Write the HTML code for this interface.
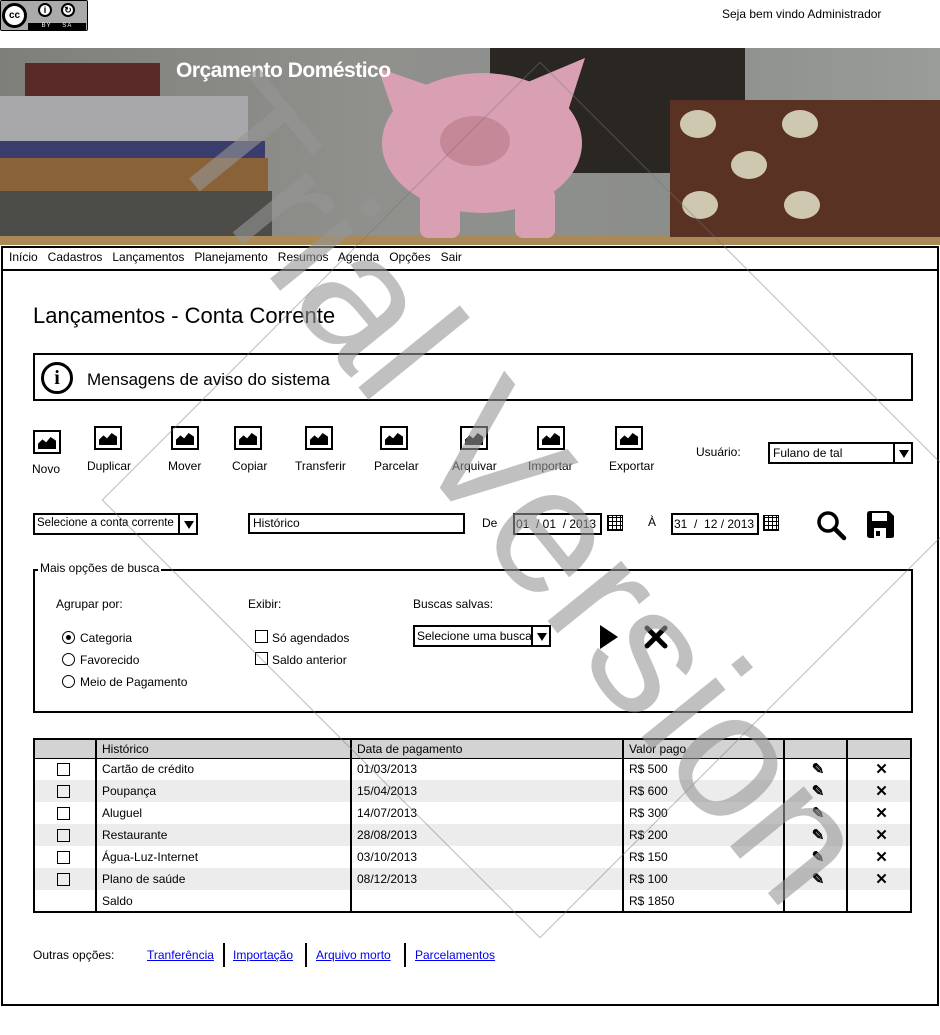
<!DOCTYPE html>
<html><head><meta charset="utf-8"><style>
*{margin:0;padding:0;box-sizing:border-box}
body{width:940px;height:1009px;position:relative;overflow:hidden;background:#fff;font-family:"Liberation Sans",sans-serif;font-size:12px;color:#000}
.a{position:absolute}
.bx{position:absolute;border:2px solid #000;background:#fff}
.ico{position:absolute;width:28px;height:24px;border:2px solid #000;background:#fff}
.ico:after{content:"";position:absolute;left:3px;right:3px;bottom:3px;height:12px;background:#000;clip-path:polygon(0 100%,0 55%,25% 20%,45% 45%,70% 0,100% 30%,100% 100%)}
.lbl{position:absolute;font-size:12px}
.sel .arr{position:absolute;right:0;top:0;bottom:0;width:18px;border-left:2px solid #000}
.sel .arr:after{content:"";position:absolute;left:4px;top:6px;border-left:5px solid transparent;border-right:5px solid transparent;border-top:8px solid #000}
.cal{position:absolute;width:16px;height:16px;border:1px solid #000;background:repeating-linear-gradient(90deg,#000 0 1px,transparent 1px 4px),repeating-linear-gradient(0deg,#000 0 1px,transparent 1px 4px)}
.rad{position:absolute;width:13px;height:13px;border:1.5px solid #000;border-radius:50%}
.chk{position:absolute;width:13px;height:13px;border:1.5px solid #000;background:#fff}
table{position:absolute;left:33px;top:738px;width:879px;border-collapse:collapse;border:2px solid #000}
td{height:22px;font-size:12px;padding-left:5px;border-left:2px solid #000;vertical-align:middle}
tr.h td{background:#d3d3d3;height:19px;border-bottom:1px solid #000}
tr.s td{background:#ececec}
.ck{display:inline-block;width:13px;height:13px;border:1.5px solid #000;margin-left:22px;vertical-align:middle}
.pe{text-align:center;font-size:15px;font-weight:bold}
.x{text-align:center;font-size:15px;font-weight:bold}
a{color:#00e;text-decoration:underline}
</style></head><body>
<div class="a" style="left:0;top:0;width:88px;height:31px;background:#000;border-radius:2px">
<div class="a" style="left:1px;top:1px;width:86px;height:29px;background:#aaa"></div>
<div class="a" style="left:28px;top:23px;width:58px;height:7px;background:#000;color:#fff;font-size:6px;line-height:7px;text-align:center;letter-spacing:1px">BY&nbsp;&nbsp;&nbsp;&nbsp;SA</div>
<div class="a" style="left:2px;top:3px;width:25px;height:25px;border-radius:50%;background:#fff;border:3px solid #000;font-weight:bold;font-size:10px;line-height:19px;text-align:center">cc</div>
<div class="a" style="left:38px;top:3px;width:14px;height:14px;border-radius:50%;background:#fff;border:2px solid #000;font-size:9px;font-weight:bold;line-height:10px;text-align:center">i</div>
<div class="a" style="left:61px;top:3px;width:14px;height:14px;border-radius:50%;background:#fff;border:2px solid #000;font-size:9px;font-weight:bold;line-height:10px;text-align:center">↻</div>
</div>
<div class="a" style="left:722px;top:7px;font-size:12px">Seja bem vindo Administrador</div>
<div class="a" style="left:0;top:48px;width:940px;height:197px;background:#8a8c88;overflow:hidden">
<div class="a" style="left:0;top:0;width:940px;height:197px;background:linear-gradient(90deg,#7e7f7b,#90918d 40%,#8c8e8c 70%,#9a9c9a)"></div>
<div class="a" style="left:490px;top:0;width:255px;height:125px;background:#2a2622"></div>
<div class="a" style="left:25px;top:15px;width:135px;height:33px;background:#5a2a28"></div>
<div class="a" style="left:0;top:48px;width:248px;height:62px;background:#a8a8aa"></div>
<div class="a" style="left:0;top:93px;width:265px;height:20px;background:#3a3d6c"></div>
<div class="a" style="left:0;top:110px;width:268px;height:33px;background:#8a6238"></div>
<div class="a" style="left:0;top:143px;width:272px;height:50px;background:#4c4c48"></div>
<div class="a" style="left:0;top:188px;width:940px;height:9px;background:#a98955"></div>
<div class="a" style="left:378px;top:20px;width:75px;height:65px;background:#d9a0b4;clip-path:polygon(0 0,100% 40%,30% 100%)"></div>
<div class="a" style="left:510px;top:10px;width:75px;height:70px;background:#d9a0b4;clip-path:polygon(100% 0,70% 100%,0 45%)"></div>
<div class="a" style="left:382px;top:25px;width:200px;height:140px;border-radius:50%;background:#d9a0b4"></div>
<div class="a" style="left:420px;top:140px;width:40px;height:50px;background:#d9a0b4;border-radius:8px"></div>
<div class="a" style="left:515px;top:140px;width:40px;height:50px;background:#d9a0b4;border-radius:8px"></div>
<div class="a" style="left:440px;top:68px;width:70px;height:50px;border-radius:50%;background:#c58898"></div>
<div class="a" style="left:670px;top:52px;width:270px;height:137px;background:#5a3224"></div>
<div class="a" style="left:680px;top:62px;width:36px;height:28px;border-radius:50%;background:#cfc8b0"></div>
<div class="a" style="left:782px;top:62px;width:36px;height:28px;border-radius:50%;background:#cfc8b0"></div>
<div class="a" style="left:731px;top:103px;width:36px;height:28px;border-radius:50%;background:#cfc8b0"></div>
<div class="a" style="left:682px;top:143px;width:36px;height:28px;border-radius:50%;background:#cfc8b0"></div>
<div class="a" style="left:784px;top:143px;width:36px;height:28px;border-radius:50%;background:#cfc8b0"></div>
<div class="a" style="left:176px;top:11px;color:#fff;font-weight:bold;font-size:21px;letter-spacing:-0.5px">Orçamento Doméstico</div>
</div>
<div class="a" style="left:1px;top:246px;width:938px;height:760px;border:2px solid #000;border-top:none"></div>
<div class="a" style="left:1px;top:246px;width:938px;height:25px;border:2px solid #000;background:#fff"></div>
<div class="a" style="left:9px;top:250px;font-size:12px">Início&nbsp;&nbsp; Cadastros&nbsp;&nbsp; Lançamentos&nbsp;&nbsp; Planejamento&nbsp;&nbsp; Resumos&nbsp;&nbsp; Agenda&nbsp;&nbsp; Opções&nbsp;&nbsp; Sair</div>
<div class="a" style="left:33px;top:303px;font-size:22px">Lançamentos - Conta Corrente</div>
<div class="bx" style="left:33px;top:353px;width:880px;height:48px"></div>
<div class="a" style="left:41px;top:362px;width:32px;height:32px;border:3px solid #000;border-radius:50%;text-align:center;font:bold 20px/26px 'Liberation Serif',serif">i</div>
<div class="a" style="left:87px;top:370px;font-size:17px">Mensagens de aviso do sistema</div>
<div class="ico" style="left:33px;top:430px"></div><div class="lbl" style="left:32px;top:462px">Novo</div>
<div class="ico" style="left:94px;top:426px"></div><div class="lbl" style="left:87px;top:459px">Duplicar</div>
<div class="ico" style="left:171px;top:426px"></div><div class="lbl" style="left:168px;top:459px">Mover</div>
<div class="ico" style="left:234px;top:426px"></div><div class="lbl" style="left:232px;top:459px">Copiar</div>
<div class="ico" style="left:305px;top:426px"></div><div class="lbl" style="left:295px;top:459px">Transferir</div>
<div class="ico" style="left:380px;top:426px"></div><div class="lbl" style="left:374px;top:459px">Parcelar</div>
<div class="ico" style="left:460px;top:426px"></div><div class="lbl" style="left:452px;top:459px">Arquivar</div>
<div class="ico" style="left:537px;top:426px"></div><div class="lbl" style="left:528px;top:459px">Importar</div>
<div class="ico" style="left:615px;top:426px"></div><div class="lbl" style="left:609px;top:459px">Exportar</div>
<div class="lbl" style="left:696px;top:445px">Usuário:</div>
<div class="bx sel" style="left:768px;top:442px;width:145px;height:22px;padding:2px 3px">Fulano de tal<div class="arr"></div></div>
<div class="bx sel" style="left:33px;top:513px;width:165px;height:22px;padding:2px 2px;font-size:11.5px">Selecione a conta corrente<div class="arr"></div></div>
<div class="bx" style="left:248px;top:513px;width:217px;height:21px;padding:1px 3px">Histórico</div>
<div class="lbl" style="left:482px;top:516px">De</div>
<div class="bx" style="left:513px;top:513px;width:89px;height:22px;padding:2px 1px">01&nbsp; / 01&nbsp; / 2013</div>
<div class="cal" style="left:607px;top:515px"></div>
<div class="lbl" style="left:648px;top:515px">À</div>
<div class="bx" style="left:671px;top:513px;width:88px;height:22px;padding:2px 1px">31&nbsp; /&nbsp; 12 / 2013</div>
<div class="cal" style="left:763px;top:515px"></div>
<svg class="a" style="left:815px;top:509px" width="34" height="32" viewBox="0 0 34 32"><circle cx="13" cy="13" r="9" fill="none" stroke="#000" stroke-width="3.5"/><line x1="19.5" y1="19.5" x2="29" y2="29" stroke="#000" stroke-width="4.5" stroke-linecap="round"/></svg>
<svg class="a" style="left:865px;top:510px" width="30" height="29" viewBox="0 0 30 29"><path d="M2 4Q2 1 5 1H24L29 6V26Q29 28 26 28H5Q2 28 2 25Z" fill="#000"/><rect x="7" y="3" width="15" height="8" fill="#fff"/><rect x="9" y="18" width="12" height="10" fill="#fff"/><rect x="11" y="21" width="4" height="5" fill="#000"/></svg>
<div class="bx" style="left:33px;top:569px;width:880px;height:144px;background:transparent"></div>
<div class="a" style="left:38px;top:561px;background:#fff;padding:0 2px">Mais opções de busca</div>
<div class="lbl" style="left:56px;top:597px">Agrupar por:</div>
<div class="rad" style="left:62px;top:631px"><div class="a" style="left:2.5px;top:2.5px;width:5px;height:5px;border-radius:50%;background:#000"></div></div><div class="lbl" style="left:80px;top:631px">Categoria</div>
<div class="rad" style="left:62px;top:653px"></div><div class="lbl" style="left:80px;top:653px">Favorecido</div>
<div class="rad" style="left:62px;top:675px"></div><div class="lbl" style="left:80px;top:675px">Meio de Pagamento</div>
<div class="lbl" style="left:248px;top:597px">Exibir:</div>
<div class="chk" style="left:255px;top:630px"></div><div class="lbl" style="left:272px;top:631px">Só agendados</div>
<div class="chk" style="left:255px;top:652px"></div><div class="lbl" style="left:272px;top:653px">Saldo anterior</div>
<div class="lbl" style="left:413px;top:597px">Buscas salvas:</div>
<div class="bx sel" style="left:413px;top:625px;width:138px;height:22px;padding:2px 2px">Selecione uma busca<div class="arr"></div></div>
<svg class="a" style="left:598px;top:624px" width="22" height="26"><path d="M2 1L20 13L2 25Z" fill="#000"/></svg>
<svg class="a" style="left:643px;top:624px" width="26" height="26"><path d="M4 4L22 22M22 4L4 22" stroke="#000" stroke-width="5" stroke-linecap="round"/></svg>
<table>
<tr class="h"><td style="width:62px;border-left:none"></td><td style="width:255px">Histórico</td><td style="width:272px">Data de pagamento</td><td style="width:161px">Valor pago</td><td style="width:63px"></td><td></td></tr>
<tr><td style="border-left:none;padding:0"><span class="ck"></span></td><td>Cartão de crédito</td><td>01/03/2013</td><td>R$ 500</td><td class="pe">✎</td><td class="x">✕</td></tr>
<tr class="s"><td style="border-left:none;padding:0"><span class="ck"></span></td><td>Poupança</td><td>15/04/2013</td><td>R$ 600</td><td class="pe">✎</td><td class="x">✕</td></tr>
<tr><td style="border-left:none;padding:0"><span class="ck"></span></td><td>Aluguel</td><td>14/07/2013</td><td>R$ 300</td><td class="pe">✎</td><td class="x">✕</td></tr>
<tr class="s"><td style="border-left:none;padding:0"><span class="ck"></span></td><td>Restaurante</td><td>28/08/2013</td><td>R$ 200</td><td class="pe">✎</td><td class="x">✕</td></tr>
<tr><td style="border-left:none;padding:0"><span class="ck"></span></td><td>Água-Luz-Internet</td><td>03/10/2013</td><td>R$ 150</td><td class="pe">✎</td><td class="x">✕</td></tr>
<tr class="s"><td style="border-left:none;padding:0"><span class="ck"></span></td><td>Plano de saúde</td><td>08/12/2013</td><td>R$ 100</td><td class="pe">✎</td><td class="x">✕</td></tr>
<tr><td style="border-left:none"></td><td>Saldo</td><td></td><td>R$ 1850</td><td></td><td></td></tr>
</table>
<div class="lbl" style="left:33px;top:948px">Outras opções:</div>
<div class="lbl" style="left:147px;top:948px"><a>Tranferência</a></div>
<div class="a" style="left:223px;top:943px;width:2px;height:24px;background:#000"></div>
<div class="lbl" style="left:233px;top:948px"><a>Importação</a></div>
<div class="a" style="left:305px;top:943px;width:2px;height:24px;background:#000"></div>
<div class="lbl" style="left:316px;top:948px"><a>Arquivo morto</a></div>
<div class="a" style="left:404px;top:943px;width:2px;height:24px;background:#000"></div>
<div class="lbl" style="left:415px;top:948px"><a>Parcelamentos</a></div>
<div class="a" style="left:230px;top:190px;width:620px;height:620px;transform:rotate(45deg);border:1px solid rgba(120,120,120,0.5)"></div>
<div class="a" style="left:520px;top:490px;width:0;height:0">
<div style="position:absolute;left:-620px;top:-95px;width:1240px;text-align:center;font-size:180px;line-height:190px;color:rgba(150,150,150,0.6);transform:rotate(51deg);white-space:nowrap">Trial Version</div>
</div>
</body></html>
